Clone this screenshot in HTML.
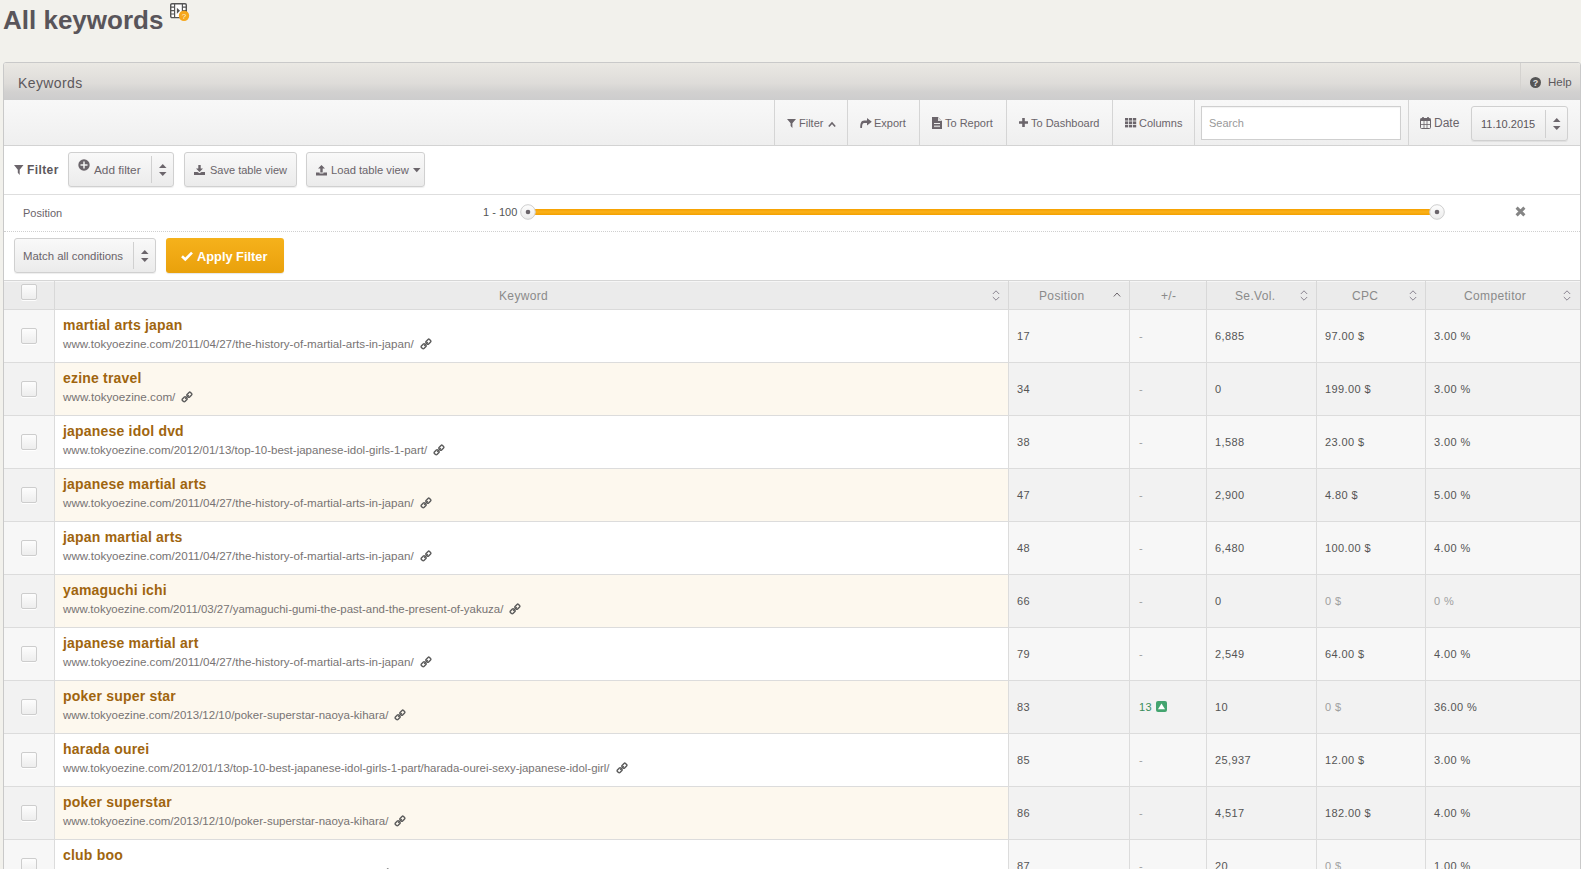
<!DOCTYPE html>
<html><head><meta charset="utf-8">
<style>
*{box-sizing:border-box;margin:0;padding:0}
html,body{width:1581px;height:869px;overflow:hidden}
body{background:#f2f1ec;font-family:"Liberation Sans",sans-serif;color:#666;position:relative}
.a{position:absolute;white-space:nowrap}
svg.a{overflow:visible}
.t11{font-size:11px;line-height:11px;color:#6a646a}
.tb{font-size:11px;line-height:11px;color:#6a646a}
.kw{font-size:14px;line-height:14px;font-weight:bold;letter-spacing:0.2px;color:#a0650e}
.url{font-size:11.6px;line-height:12px;color:#777373}
.num{font-size:11px;line-height:11px;letter-spacing:0.4px;color:#555}
.lt{color:#a0a0a0}
.cb{width:16px;height:16px;border:1px solid #cdcdcd;border-radius:2px;background:linear-gradient(#fdfdfd,#ededed);box-shadow:0 1px 0 rgba(255,255,255,.9)}
.btn{position:absolute;border:1px solid #d0d0d0;border-radius:3px;background:linear-gradient(#f9f9f9,#ebebeb);box-shadow:0 1px 1px rgba(0,0,0,.07)}
.hl{position:absolute;height:1px}
.vl{position:absolute;width:1px}
.th{font-size:12px;line-height:12px;letter-spacing:0.35px;color:#8a8a8a}
</style></head><body>

<div class="a " style="left:3px;top:7px;font-size:26px;line-height:26px;font-weight:bold;color:#59555a">All keywords</div>
<svg class="a" style="left:170px;top:3px" width="20" height="19" viewBox="0 0 20 19" ><rect x="0.7" y="0.7" width="15.6" height="13.9" rx="1.3" fill="#fff" stroke="#555" stroke-width="1.4"/><path d="M4.6 1 V14.5 M12.4 1 V14.5 M1 4.2 H4.6 M1 7.6 H4.6 M1 11 H4.6 M12.4 4.2 H16 M12.4 7.6 H16" stroke="#555" stroke-width="1.2"/><path d="M6.9 4.8 L10 7.8 L6.9 10.8Z" fill="#555"/><circle cx="14" cy="12.7" r="5.2" fill="#f6a71c"/><text x="14" y="15.6" font-size="8" text-anchor="middle" fill="#fdf3dc" font-family="Liberation Sans">?</text></svg>
<div class="a" style="left:3px;top:62px;width:1578px;height:820px;border:1px solid #c9c9c9;border-radius:3px 3px 0 0;background:#fff"></div>
<div class="a" style="left:4px;top:63px;width:1576px;height:37px;background:linear-gradient(#eae8e3,#dedcd9 55%,#d2d1d0 78%,#cdcdcd);border-radius:2px 2px 0 0"></div>
<div class="a " style="left:18px;top:76px;font-size:14px;line-height:14px;letter-spacing:0.4px;color:#5c585c">Keywords</div>
<div class="vl" style="left:1520px;top:63px;height:30px;background:#d4d2cf"></div>
<svg class="a" style="left:1530px;top:77px" width="11" height="11" viewBox="0 0 11 11" ><circle cx="5.5" cy="5.5" r="5.5" fill="#555"/><text x="5.5" y="8.8" font-size="9" font-weight="bold" text-anchor="middle" fill="#e5e3e0" font-family="Liberation Sans">?</text></svg>
<div class="a t11" style="left:1548px;top:77px;font-size:11.5px;color:#5c585c">Help</div>
<div class="a" style="left:4px;top:100px;width:1576px;height:46px;background:linear-gradient(#f8f8f8,#efefef);border-bottom:1px solid #d3d3d3"></div>
<div class="vl" style="left:774px;top:100px;height:45px;background:#d5d5d5"></div>
<div class="vl" style="left:847px;top:100px;height:45px;background:#d5d5d5"></div>
<div class="vl" style="left:919px;top:100px;height:45px;background:#d5d5d5"></div>
<div class="vl" style="left:1006px;top:100px;height:45px;background:#d5d5d5"></div>
<div class="vl" style="left:1112px;top:100px;height:45px;background:#d5d5d5"></div>
<div class="vl" style="left:1194px;top:100px;height:45px;background:#d5d5d5"></div>
<div class="vl" style="left:1408px;top:100px;height:45px;background:#d5d5d5"></div>
<svg class="a" style="left:787px;top:119px" width="9" height="9" viewBox="0 0 9 9" ><path d="M0 0 H9 L5.3999999999999995 4.32 V9 L3.6 7.0200000000000005 V4.32 Z" fill="#6b656b"/></svg>
<div class="a tb" style="left:799px;top:118px;">Filter</div>
<svg class="a" style="left:827.5px;top:122px" width="8" height="5" viewBox="0 0 8 5" ><path d="M0.8 4.5 L4 1 L7.2 4.5" fill="none" stroke="#6b656b" stroke-width="1.6"/></svg>
<svg class="a" style="left:860px;top:118px" width="12" height="10" viewBox="0 0 12 10" ><path d="M7 0 L11.8 3.8 L7 7.6 V5.1 H4.2 C2.8 5.1 2.1 6.4 2 10 H0.3 C0.1 5.2 1.2 2.5 4.2 2.5 H7 Z" fill="#6b656b"/></svg>
<div class="a tb" style="left:874px;top:118px;">Export</div>
<svg class="a" style="left:932px;top:117px" width="10" height="12" viewBox="0 0 10 12" ><path d="M0 0 H6 L10 4 V12 H0Z" fill="#6b656b"/><path d="M6 0 V4 H10" fill="#ddd"/><rect x="2" y="6" width="6" height="1" fill="#eee"/><rect x="2" y="8.5" width="6" height="1.6" fill="#ccc"/></svg>
<div class="a tb" style="left:945px;top:118px;">To Report</div>
<svg class="a" style="left:1019px;top:118px" width="9" height="9" viewBox="0 0 9 9" ><path d="M3.2 0 H5.8 V3.2 H9 V5.8 H5.8 V9 H3.2 V5.8 H0 V3.2 H3.2Z" fill="#6b656b"/></svg>
<div class="a tb" style="left:1031px;top:118px;">To Dashboard</div>
<svg class="a" style="left:1124.5px;top:118px" width="12" height="10" viewBox="0 0 12 10" ><rect x="0" y="0.0" width="3.2" height="2.6" fill="#6b656b"/><rect x="0" y="3.4" width="3.2" height="2.6" fill="#6b656b"/><rect x="0" y="6.8" width="3.2" height="2.6" fill="#6b656b"/><rect x="4" y="0.0" width="3.2" height="2.6" fill="#6b656b"/><rect x="4" y="3.4" width="3.2" height="2.6" fill="#6b656b"/><rect x="4" y="6.8" width="3.2" height="2.6" fill="#6b656b"/><rect x="8" y="0.0" width="3.2" height="2.6" fill="#6b656b"/><rect x="8" y="3.4" width="3.2" height="2.6" fill="#6b656b"/><rect x="8" y="6.8" width="3.2" height="2.6" fill="#6b656b"/></svg>
<div class="a tb" style="left:1139px;top:118px;">Columns</div>
<div class="a" style="left:1201px;top:106px;width:200px;height:34px;border:1px solid #cfcfcf;background:#fff;box-shadow:inset 0 1px 1px rgba(0,0,0,.05)"></div>
<div class="a " style="left:1209px;top:118px;font-size:11px;line-height:11px;color:#999">Search</div>
<svg class="a" style="left:1420px;top:117px" width="11" height="12" viewBox="0 0 11 12" ><rect x="0.5" y="1.5" width="10" height="10" rx="1" fill="none" stroke="#6b656b" stroke-width="1"/><rect x="0.5" y="1.5" width="10" height="2.5" fill="#6b656b"/><path d="M0.5 7.5 H10.5 M4 4 V11.5 M7 4 V11.5" stroke="#6b656b" stroke-width="0.8"/><rect x="2.2" y="0" width="1.6" height="3" fill="#6b656b"/><rect x="7.2" y="0" width="1.6" height="3" fill="#6b656b"/></svg>
<div class="a tb" style="left:1434px;top:118px;font-size:12px">Date</div>
<div class="btn" style="left:1471px;top:106px;width:97px;height:35px"></div>
<div class="vl" style="left:1545px;top:110px;height:28px;background:#d0d0d0"></div>
<div class="a tb" style="left:1481px;top:119px;color:#5a555a">11.10.2015</div>
<svg class="a" style="left:1552.75px;top:118px" width="7.5" height="12" viewBox="0 0 7.5 12" ><path d="M0 3.9 L3.75 0.1 L7.5 3.9Z M0 7.9 L3.75 11.9 L7.5 7.9Z" fill="#6b656b"/></svg>
<div class="hl" style="left:4px;top:194px;width:1576px;background:#dedede"></div>
<svg class="a" style="left:14px;top:165px" width="9.5" height="10" viewBox="0 0 9.5 10" ><path d="M0 0 H9.5 L5.7 4.8 V10 L3.8000000000000003 7.800000000000001 V4.8 Z" fill="#6b656b"/></svg>
<div class="a " style="left:27px;top:164px;font-size:12px;line-height:12px;letter-spacing:0.4px;font-weight:bold;color:#5c575c">Filter</div>
<div class="btn" style="left:68px;top:152px;width:106px;height:35px"></div>
<div class="vl" style="left:151px;top:156px;height:27px;background:#d0d0d0"></div>
<svg class="a" style="left:78px;top:159px" width="12" height="12" viewBox="0 0 12 12" ><circle cx="6" cy="6" r="5.7" fill="#6b656b"/><path d="M6 2.5 V9.5 M2.5 6 H9.5" stroke="#f4f4f4" stroke-width="1.5"/></svg>
<div class="a tb" style="left:94px;top:165px;font-size:11.8px">Add filter</div>
<svg class="a" style="left:158.75px;top:164px" width="7.5" height="12" viewBox="0 0 7.5 12" ><path d="M0 3.9 L3.75 0.1 L7.5 3.9Z M0 7.9 L3.75 11.9 L7.5 7.9Z" fill="#6b656b"/></svg>
<div class="btn" style="left:184px;top:152px;width:113px;height:35px"></div>
<svg class="a" style="left:194px;top:164.5px" width="11" height="10" viewBox="0 0 11 10" ><path d="M4.3 0 H6.7 V3.5 H9 L5.5 7 L2 3.5 H4.3Z M0 7 H3.5 L5.5 8.2 L7.5 7 H11 V10 H0Z" fill="#6b656b"/></svg>
<div class="a tb" style="left:210px;top:165px;">Save table view</div>
<div class="btn" style="left:306px;top:152px;width:119px;height:35px"></div>
<svg class="a" style="left:315.5px;top:164.5px" width="11" height="10.5" viewBox="0 0 11 10.5" ><path d="M5.5 0 L9 3.6 H6.7 V7.5 H4.3 V3.6 H2Z M0 7.5 H3.6 V8.6 H7.4 V7.5 H11 V10.5 H0Z" fill="#6b656b"/></svg>
<div class="a tb" style="left:331px;top:165px;font-size:11.2px">Load table view</div>
<svg class="a" style="left:412.5px;top:168px" width="8" height="5" viewBox="0 0 8 5" ><path d="M0 0 H7.5 L3.75 4.2Z" fill="#6b656b"/></svg>
<div class="a tb" style="left:23px;top:208px;">Position</div>
<div class="a " style="left:483px;top:207px;font-size:11px;line-height:11px;color:#555">1 - 100</div>
<div class="a" style="left:528px;top:209px;width:909px;height:6px;background:linear-gradient(#f5a000,#fbb21a 50%,#f3a000)"></div>
<svg class="a" style="left:519.5px;top:204px" width="16" height="16" viewBox="0 0 16 16" ><defs><linearGradient id="hg" x1="0" y1="0" x2="0" y2="1"><stop offset="0" stop-color="#fdfdfd"/><stop offset="1" stop-color="#ececec"/></linearGradient></defs><circle cx="8" cy="8" r="7.3" fill="url(#hg)" stroke="#cfcfcf" stroke-width="1"/><circle cx="8" cy="8" r="2.3" fill="#6b656b"/></svg>
<svg class="a" style="left:1429px;top:204px" width="16" height="16" viewBox="0 0 16 16" ><defs><linearGradient id="hg" x1="0" y1="0" x2="0" y2="1"><stop offset="0" stop-color="#fdfdfd"/><stop offset="1" stop-color="#ececec"/></linearGradient></defs><circle cx="8" cy="8" r="7.3" fill="url(#hg)" stroke="#cfcfcf" stroke-width="1"/><circle cx="8" cy="8" r="2.3" fill="#6b656b"/></svg>
<svg class="a" style="left:1515px;top:206px" width="11" height="11" viewBox="0 0 11 11" ><path d="M1.6 1.6 L9.4 9.4 M9.4 1.6 L1.6 9.4" stroke="#858585" stroke-width="3"/></svg>
<div class="hl" style="left:4px;top:231px;width:1576px;border-top:1px dotted #cfcfcf"></div>
<div class="btn" style="left:14px;top:238px;width:142px;height:35px"></div>
<div class="vl" style="left:133px;top:242px;height:27px;background:#d0d0d0"></div>
<div class="a tb" style="left:23px;top:251px;font-size:11.4px">Match all conditions</div>
<svg class="a" style="left:140.75px;top:250px" width="7.5" height="12" viewBox="0 0 7.5 12" ><path d="M0 3.9 L3.75 0.1 L7.5 3.9Z M0 7.9 L3.75 11.9 L7.5 7.9Z" fill="#6b656b"/></svg>
<div class="a" style="left:166px;top:238px;width:118px;height:35px;border-radius:3px;background:linear-gradient(#f5b21b,#f0a914 50%,#e9a10b);box-shadow:0 1px 1px rgba(0,0,0,.1)"></div>
<svg class="a" style="left:181px;top:251px" width="12" height="10" viewBox="0 0 12 10" ><path d="M1 5.2 L4.3 8.4 L11 1.6" fill="none" stroke="#fff" stroke-width="2.6"/></svg>
<div class="a " style="left:197px;top:251px;font-size:12.8px;line-height:12px;font-weight:bold;color:#fff">Apply Filter</div>
<div class="a" style="left:4px;top:280px;width:1576px;height:30px;background:#ebebeb;border-top:1px solid #d6d6d6;border-bottom:1px solid #dadada"></div>
<div class="hl" style="left:4px;top:281px;width:1576px;background:#f6f6f6"></div>
<div class="vl" style="left:54px;top:281px;height:28px;background:#d8d8d8"></div>
<div class="vl" style="left:1008px;top:281px;height:28px;background:#d8d8d8"></div>
<div class="vl" style="left:1129px;top:281px;height:28px;background:#d8d8d8"></div>
<div class="vl" style="left:1206px;top:281px;height:28px;background:#d8d8d8"></div>
<div class="vl" style="left:1316px;top:281px;height:28px;background:#d8d8d8"></div>
<div class="vl" style="left:1425px;top:281px;height:28px;background:#d8d8d8"></div>
<div class="a cb" style="left:21px;top:284px"></div>
<div class="a th" style="left:499px;top:290px;">Keyword</div>
<svg class="a" style="left:991.5px;top:290px" width="8" height="11" viewBox="0 0 8 11" ><path d="M0.8 4 L4 0.8 L7.2 4 M0.8 7 L4 10.2 L7.2 7" fill="none" stroke="#8a8490" stroke-width="1"/></svg>
<div class="a th" style="left:1039px;top:290px;">Position</div>
<svg class="a" style="left:1112.5px;top:292px" width="8" height="5" viewBox="0 0 8 5" ><path d="M0.8 4.5 L4 1 L7.2 4.5" fill="none" stroke="#6b656b" stroke-width="1.0"/></svg>
<div class="a th" style="left:1161px;top:290px;">+/-</div>
<div class="a th" style="left:1235px;top:290px;">Se.Vol.</div>
<svg class="a" style="left:1299.5px;top:290px" width="8" height="11" viewBox="0 0 8 11" ><path d="M0.8 4 L4 0.8 L7.2 4 M0.8 7 L4 10.2 L7.2 7" fill="none" stroke="#8a8490" stroke-width="1"/></svg>
<div class="a th" style="left:1352px;top:290px;">CPC</div>
<svg class="a" style="left:1408.5px;top:290px" width="8" height="11" viewBox="0 0 8 11" ><path d="M0.8 4 L4 0.8 L7.2 4 M0.8 7 L4 10.2 L7.2 7" fill="none" stroke="#8a8490" stroke-width="1"/></svg>
<div class="a th" style="left:1464px;top:290px;">Competitor</div>
<svg class="a" style="left:1563px;top:290px" width="8" height="11" viewBox="0 0 8 11" ><path d="M0.8 4 L4 0.8 L7.2 4 M0.8 7 L4 10.2 L7.2 7" fill="none" stroke="#8a8490" stroke-width="1"/></svg>
<div class="a" style="left:4px;top:310px;width:50px;height:52px;background:#f7f7f7"></div>
<div class="vl" style="left:54px;top:310px;height:53px;background:#dcdcdc"></div>
<div class="a" style="left:55px;top:310px;width:953px;height:52px;background:#ffffff"></div>
<div class="vl" style="left:1008px;top:310px;height:53px;background:#dcdcdc"></div>
<div class="a" style="left:1009px;top:310px;width:120px;height:52px;background:#f7f7f7"></div>
<div class="vl" style="left:1129px;top:310px;height:53px;background:#dcdcdc"></div>
<div class="a" style="left:1130px;top:310px;width:76px;height:52px;background:#f7f7f7"></div>
<div class="vl" style="left:1206px;top:310px;height:53px;background:#dcdcdc"></div>
<div class="a" style="left:1207px;top:310px;width:109px;height:52px;background:#f7f7f7"></div>
<div class="vl" style="left:1316px;top:310px;height:53px;background:#dcdcdc"></div>
<div class="a" style="left:1317px;top:310px;width:108px;height:52px;background:#f7f7f7"></div>
<div class="vl" style="left:1425px;top:310px;height:53px;background:#dcdcdc"></div>
<div class="a" style="left:1426px;top:310px;width:154px;height:52px;background:#f7f7f7"></div>
<div class="hl" style="left:4px;top:362px;width:1576px;background:#dcdcdc"></div>
<div class="a cb" style="left:21px;top:328px"></div>
<div class="a kw" style="left:63px;top:318px;">martial arts japan</div>
<div class="a url" style="left:63px;top:338px;font-size:11.64px">www.tokyoezine.com/2011/04/27/the-history-of-martial-arts-in-japan/</div>
<svg class="a" style="left:420px;top:338px" width="12" height="12" viewBox="0 0 12 12" ><g transform="rotate(-45 6 6)" fill="none" stroke="#5a5a5a" stroke-width="1.4"><rect x="0.3" y="4.2" width="4.8" height="3.6" rx="1"/><rect x="6.9" y="4.2" width="4.8" height="3.6" rx="1"/><path d="M3.4 6 H8.6" stroke-width="1.3"/></g></svg>
<div class="a num" style="left:1017px;top:331px;">17</div>
<div class="a num lt" style="left:1139px;top:331px;">-</div>
<div class="a num" style="left:1215px;top:331px;">6,885</div>
<div class="a num" style="left:1325px;top:331px;">97.00 $</div>
<div class="a num" style="left:1434px;top:331px;">3.00 %</div>
<div class="a" style="left:4px;top:363px;width:50px;height:52px;background:#f2f2f2"></div>
<div class="vl" style="left:54px;top:363px;height:53px;background:#dcdcdc"></div>
<div class="a" style="left:55px;top:363px;width:953px;height:52px;background:#fdf8ee"></div>
<div class="vl" style="left:1008px;top:363px;height:53px;background:#dcdcdc"></div>
<div class="a" style="left:1009px;top:363px;width:120px;height:52px;background:#f2f2f2"></div>
<div class="vl" style="left:1129px;top:363px;height:53px;background:#dcdcdc"></div>
<div class="a" style="left:1130px;top:363px;width:76px;height:52px;background:#f2f2f2"></div>
<div class="vl" style="left:1206px;top:363px;height:53px;background:#dcdcdc"></div>
<div class="a" style="left:1207px;top:363px;width:109px;height:52px;background:#f2f2f2"></div>
<div class="vl" style="left:1316px;top:363px;height:53px;background:#dcdcdc"></div>
<div class="a" style="left:1317px;top:363px;width:108px;height:52px;background:#f2f2f2"></div>
<div class="vl" style="left:1425px;top:363px;height:53px;background:#dcdcdc"></div>
<div class="a" style="left:1426px;top:363px;width:154px;height:52px;background:#f2f2f2"></div>
<div class="hl" style="left:4px;top:415px;width:1576px;background:#dcdcdc"></div>
<div class="a cb" style="left:21px;top:381px"></div>
<div class="a kw" style="left:63px;top:371px;">ezine travel</div>
<div class="a url" style="left:63px;top:391px;font-size:11.7px">www.tokyoezine.com/</div>
<svg class="a" style="left:181px;top:391px" width="12" height="12" viewBox="0 0 12 12" ><g transform="rotate(-45 6 6)" fill="none" stroke="#5a5a5a" stroke-width="1.4"><rect x="0.3" y="4.2" width="4.8" height="3.6" rx="1"/><rect x="6.9" y="4.2" width="4.8" height="3.6" rx="1"/><path d="M3.4 6 H8.6" stroke-width="1.3"/></g></svg>
<div class="a num" style="left:1017px;top:384px;">34</div>
<div class="a num lt" style="left:1139px;top:384px;">-</div>
<div class="a num" style="left:1215px;top:384px;">0</div>
<div class="a num" style="left:1325px;top:384px;">199.00 $</div>
<div class="a num" style="left:1434px;top:384px;">3.00 %</div>
<div class="a" style="left:4px;top:416px;width:50px;height:52px;background:#f7f7f7"></div>
<div class="vl" style="left:54px;top:416px;height:53px;background:#dcdcdc"></div>
<div class="a" style="left:55px;top:416px;width:953px;height:52px;background:#ffffff"></div>
<div class="vl" style="left:1008px;top:416px;height:53px;background:#dcdcdc"></div>
<div class="a" style="left:1009px;top:416px;width:120px;height:52px;background:#f7f7f7"></div>
<div class="vl" style="left:1129px;top:416px;height:53px;background:#dcdcdc"></div>
<div class="a" style="left:1130px;top:416px;width:76px;height:52px;background:#f7f7f7"></div>
<div class="vl" style="left:1206px;top:416px;height:53px;background:#dcdcdc"></div>
<div class="a" style="left:1207px;top:416px;width:109px;height:52px;background:#f7f7f7"></div>
<div class="vl" style="left:1316px;top:416px;height:53px;background:#dcdcdc"></div>
<div class="a" style="left:1317px;top:416px;width:108px;height:52px;background:#f7f7f7"></div>
<div class="vl" style="left:1425px;top:416px;height:53px;background:#dcdcdc"></div>
<div class="a" style="left:1426px;top:416px;width:154px;height:52px;background:#f7f7f7"></div>
<div class="hl" style="left:4px;top:468px;width:1576px;background:#dcdcdc"></div>
<div class="a cb" style="left:21px;top:434px"></div>
<div class="a kw" style="left:63px;top:424px;">japanese idol dvd</div>
<div class="a url" style="left:63px;top:444px;font-size:11.52px">www.tokyoezine.com/2012/01/13/top-10-best-japanese-idol-girls-1-part/</div>
<svg class="a" style="left:433px;top:444px" width="12" height="12" viewBox="0 0 12 12" ><g transform="rotate(-45 6 6)" fill="none" stroke="#5a5a5a" stroke-width="1.4"><rect x="0.3" y="4.2" width="4.8" height="3.6" rx="1"/><rect x="6.9" y="4.2" width="4.8" height="3.6" rx="1"/><path d="M3.4 6 H8.6" stroke-width="1.3"/></g></svg>
<div class="a num" style="left:1017px;top:437px;">38</div>
<div class="a num lt" style="left:1139px;top:437px;">-</div>
<div class="a num" style="left:1215px;top:437px;">1,588</div>
<div class="a num" style="left:1325px;top:437px;">23.00 $</div>
<div class="a num" style="left:1434px;top:437px;">3.00 %</div>
<div class="a" style="left:4px;top:469px;width:50px;height:52px;background:#f2f2f2"></div>
<div class="vl" style="left:54px;top:469px;height:53px;background:#dcdcdc"></div>
<div class="a" style="left:55px;top:469px;width:953px;height:52px;background:#fdf8ee"></div>
<div class="vl" style="left:1008px;top:469px;height:53px;background:#dcdcdc"></div>
<div class="a" style="left:1009px;top:469px;width:120px;height:52px;background:#f2f2f2"></div>
<div class="vl" style="left:1129px;top:469px;height:53px;background:#dcdcdc"></div>
<div class="a" style="left:1130px;top:469px;width:76px;height:52px;background:#f2f2f2"></div>
<div class="vl" style="left:1206px;top:469px;height:53px;background:#dcdcdc"></div>
<div class="a" style="left:1207px;top:469px;width:109px;height:52px;background:#f2f2f2"></div>
<div class="vl" style="left:1316px;top:469px;height:53px;background:#dcdcdc"></div>
<div class="a" style="left:1317px;top:469px;width:108px;height:52px;background:#f2f2f2"></div>
<div class="vl" style="left:1425px;top:469px;height:53px;background:#dcdcdc"></div>
<div class="a" style="left:1426px;top:469px;width:154px;height:52px;background:#f2f2f2"></div>
<div class="hl" style="left:4px;top:521px;width:1576px;background:#dcdcdc"></div>
<div class="a cb" style="left:21px;top:487px"></div>
<div class="a kw" style="left:63px;top:477px;">japanese martial arts</div>
<div class="a url" style="left:63px;top:497px;font-size:11.64px">www.tokyoezine.com/2011/04/27/the-history-of-martial-arts-in-japan/</div>
<svg class="a" style="left:420px;top:497px" width="12" height="12" viewBox="0 0 12 12" ><g transform="rotate(-45 6 6)" fill="none" stroke="#5a5a5a" stroke-width="1.4"><rect x="0.3" y="4.2" width="4.8" height="3.6" rx="1"/><rect x="6.9" y="4.2" width="4.8" height="3.6" rx="1"/><path d="M3.4 6 H8.6" stroke-width="1.3"/></g></svg>
<div class="a num" style="left:1017px;top:490px;">47</div>
<div class="a num lt" style="left:1139px;top:490px;">-</div>
<div class="a num" style="left:1215px;top:490px;">2,900</div>
<div class="a num" style="left:1325px;top:490px;">4.80 $</div>
<div class="a num" style="left:1434px;top:490px;">5.00 %</div>
<div class="a" style="left:4px;top:522px;width:50px;height:52px;background:#f7f7f7"></div>
<div class="vl" style="left:54px;top:522px;height:53px;background:#dcdcdc"></div>
<div class="a" style="left:55px;top:522px;width:953px;height:52px;background:#ffffff"></div>
<div class="vl" style="left:1008px;top:522px;height:53px;background:#dcdcdc"></div>
<div class="a" style="left:1009px;top:522px;width:120px;height:52px;background:#f7f7f7"></div>
<div class="vl" style="left:1129px;top:522px;height:53px;background:#dcdcdc"></div>
<div class="a" style="left:1130px;top:522px;width:76px;height:52px;background:#f7f7f7"></div>
<div class="vl" style="left:1206px;top:522px;height:53px;background:#dcdcdc"></div>
<div class="a" style="left:1207px;top:522px;width:109px;height:52px;background:#f7f7f7"></div>
<div class="vl" style="left:1316px;top:522px;height:53px;background:#dcdcdc"></div>
<div class="a" style="left:1317px;top:522px;width:108px;height:52px;background:#f7f7f7"></div>
<div class="vl" style="left:1425px;top:522px;height:53px;background:#dcdcdc"></div>
<div class="a" style="left:1426px;top:522px;width:154px;height:52px;background:#f7f7f7"></div>
<div class="hl" style="left:4px;top:574px;width:1576px;background:#dcdcdc"></div>
<div class="a cb" style="left:21px;top:540px"></div>
<div class="a kw" style="left:63px;top:530px;">japan martial arts</div>
<div class="a url" style="left:63px;top:550px;font-size:11.64px">www.tokyoezine.com/2011/04/27/the-history-of-martial-arts-in-japan/</div>
<svg class="a" style="left:420px;top:550px" width="12" height="12" viewBox="0 0 12 12" ><g transform="rotate(-45 6 6)" fill="none" stroke="#5a5a5a" stroke-width="1.4"><rect x="0.3" y="4.2" width="4.8" height="3.6" rx="1"/><rect x="6.9" y="4.2" width="4.8" height="3.6" rx="1"/><path d="M3.4 6 H8.6" stroke-width="1.3"/></g></svg>
<div class="a num" style="left:1017px;top:543px;">48</div>
<div class="a num lt" style="left:1139px;top:543px;">-</div>
<div class="a num" style="left:1215px;top:543px;">6,480</div>
<div class="a num" style="left:1325px;top:543px;">100.00 $</div>
<div class="a num" style="left:1434px;top:543px;">4.00 %</div>
<div class="a" style="left:4px;top:575px;width:50px;height:52px;background:#f2f2f2"></div>
<div class="vl" style="left:54px;top:575px;height:53px;background:#dcdcdc"></div>
<div class="a" style="left:55px;top:575px;width:953px;height:52px;background:#fdf8ee"></div>
<div class="vl" style="left:1008px;top:575px;height:53px;background:#dcdcdc"></div>
<div class="a" style="left:1009px;top:575px;width:120px;height:52px;background:#f2f2f2"></div>
<div class="vl" style="left:1129px;top:575px;height:53px;background:#dcdcdc"></div>
<div class="a" style="left:1130px;top:575px;width:76px;height:52px;background:#f2f2f2"></div>
<div class="vl" style="left:1206px;top:575px;height:53px;background:#dcdcdc"></div>
<div class="a" style="left:1207px;top:575px;width:109px;height:52px;background:#f2f2f2"></div>
<div class="vl" style="left:1316px;top:575px;height:53px;background:#dcdcdc"></div>
<div class="a" style="left:1317px;top:575px;width:108px;height:52px;background:#f2f2f2"></div>
<div class="vl" style="left:1425px;top:575px;height:53px;background:#dcdcdc"></div>
<div class="a" style="left:1426px;top:575px;width:154px;height:52px;background:#f2f2f2"></div>
<div class="hl" style="left:4px;top:627px;width:1576px;background:#dcdcdc"></div>
<div class="a cb" style="left:21px;top:593px"></div>
<div class="a kw" style="left:63px;top:583px;">yamaguchi ichi</div>
<div class="a url" style="left:63px;top:603px;font-size:11.46px">www.tokyoezine.com/2011/03/27/yamaguchi-gumi-the-past-and-the-present-of-yakuza/</div>
<svg class="a" style="left:509px;top:603px" width="12" height="12" viewBox="0 0 12 12" ><g transform="rotate(-45 6 6)" fill="none" stroke="#5a5a5a" stroke-width="1.4"><rect x="0.3" y="4.2" width="4.8" height="3.6" rx="1"/><rect x="6.9" y="4.2" width="4.8" height="3.6" rx="1"/><path d="M3.4 6 H8.6" stroke-width="1.3"/></g></svg>
<div class="a num" style="left:1017px;top:596px;">66</div>
<div class="a num lt" style="left:1139px;top:596px;">-</div>
<div class="a num" style="left:1215px;top:596px;">0</div>
<div class="a num lt" style="left:1325px;top:596px;">0 $</div>
<div class="a num lt" style="left:1434px;top:596px;">0 %</div>
<div class="a" style="left:4px;top:628px;width:50px;height:52px;background:#f7f7f7"></div>
<div class="vl" style="left:54px;top:628px;height:53px;background:#dcdcdc"></div>
<div class="a" style="left:55px;top:628px;width:953px;height:52px;background:#ffffff"></div>
<div class="vl" style="left:1008px;top:628px;height:53px;background:#dcdcdc"></div>
<div class="a" style="left:1009px;top:628px;width:120px;height:52px;background:#f7f7f7"></div>
<div class="vl" style="left:1129px;top:628px;height:53px;background:#dcdcdc"></div>
<div class="a" style="left:1130px;top:628px;width:76px;height:52px;background:#f7f7f7"></div>
<div class="vl" style="left:1206px;top:628px;height:53px;background:#dcdcdc"></div>
<div class="a" style="left:1207px;top:628px;width:109px;height:52px;background:#f7f7f7"></div>
<div class="vl" style="left:1316px;top:628px;height:53px;background:#dcdcdc"></div>
<div class="a" style="left:1317px;top:628px;width:108px;height:52px;background:#f7f7f7"></div>
<div class="vl" style="left:1425px;top:628px;height:53px;background:#dcdcdc"></div>
<div class="a" style="left:1426px;top:628px;width:154px;height:52px;background:#f7f7f7"></div>
<div class="hl" style="left:4px;top:680px;width:1576px;background:#dcdcdc"></div>
<div class="a cb" style="left:21px;top:646px"></div>
<div class="a kw" style="left:63px;top:636px;">japanese martial art</div>
<div class="a url" style="left:63px;top:656px;font-size:11.64px">www.tokyoezine.com/2011/04/27/the-history-of-martial-arts-in-japan/</div>
<svg class="a" style="left:420px;top:656px" width="12" height="12" viewBox="0 0 12 12" ><g transform="rotate(-45 6 6)" fill="none" stroke="#5a5a5a" stroke-width="1.4"><rect x="0.3" y="4.2" width="4.8" height="3.6" rx="1"/><rect x="6.9" y="4.2" width="4.8" height="3.6" rx="1"/><path d="M3.4 6 H8.6" stroke-width="1.3"/></g></svg>
<div class="a num" style="left:1017px;top:649px;">79</div>
<div class="a num lt" style="left:1139px;top:649px;">-</div>
<div class="a num" style="left:1215px;top:649px;">2,549</div>
<div class="a num" style="left:1325px;top:649px;">64.00 $</div>
<div class="a num" style="left:1434px;top:649px;">4.00 %</div>
<div class="a" style="left:4px;top:681px;width:50px;height:52px;background:#f2f2f2"></div>
<div class="vl" style="left:54px;top:681px;height:53px;background:#dcdcdc"></div>
<div class="a" style="left:55px;top:681px;width:953px;height:52px;background:#fdf8ee"></div>
<div class="vl" style="left:1008px;top:681px;height:53px;background:#dcdcdc"></div>
<div class="a" style="left:1009px;top:681px;width:120px;height:52px;background:#f2f2f2"></div>
<div class="vl" style="left:1129px;top:681px;height:53px;background:#dcdcdc"></div>
<div class="a" style="left:1130px;top:681px;width:76px;height:52px;background:#f2f2f2"></div>
<div class="vl" style="left:1206px;top:681px;height:53px;background:#dcdcdc"></div>
<div class="a" style="left:1207px;top:681px;width:109px;height:52px;background:#f2f2f2"></div>
<div class="vl" style="left:1316px;top:681px;height:53px;background:#dcdcdc"></div>
<div class="a" style="left:1317px;top:681px;width:108px;height:52px;background:#f2f2f2"></div>
<div class="vl" style="left:1425px;top:681px;height:53px;background:#dcdcdc"></div>
<div class="a" style="left:1426px;top:681px;width:154px;height:52px;background:#f2f2f2"></div>
<div class="hl" style="left:4px;top:733px;width:1576px;background:#dcdcdc"></div>
<div class="a cb" style="left:21px;top:699px"></div>
<div class="a kw" style="left:63px;top:689px;">poker super star</div>
<div class="a url" style="left:63px;top:709px;font-size:11.5px">www.tokyoezine.com/2013/12/10/poker-superstar-naoya-kihara/</div>
<svg class="a" style="left:394px;top:709px" width="12" height="12" viewBox="0 0 12 12" ><g transform="rotate(-45 6 6)" fill="none" stroke="#5a5a5a" stroke-width="1.4"><rect x="0.3" y="4.2" width="4.8" height="3.6" rx="1"/><rect x="6.9" y="4.2" width="4.8" height="3.6" rx="1"/><path d="M3.4 6 H8.6" stroke-width="1.3"/></g></svg>
<div class="a num" style="left:1017px;top:702px;">83</div>
<div class="a num" style="left:1139px;top:702px;color:#3a8d5c">13</div>
<svg class="a" style="left:1156px;top:701px" width="11" height="11" viewBox="0 0 11 11" ><rect width="11" height="11" rx="2" fill="#43a46f"/><path d="M2 8.2 H9 L5.5 2.6Z" fill="#fff"/></svg>
<div class="a num" style="left:1215px;top:702px;">10</div>
<div class="a num lt" style="left:1325px;top:702px;">0 $</div>
<div class="a num" style="left:1434px;top:702px;">36.00 %</div>
<div class="a" style="left:4px;top:734px;width:50px;height:52px;background:#f7f7f7"></div>
<div class="vl" style="left:54px;top:734px;height:53px;background:#dcdcdc"></div>
<div class="a" style="left:55px;top:734px;width:953px;height:52px;background:#ffffff"></div>
<div class="vl" style="left:1008px;top:734px;height:53px;background:#dcdcdc"></div>
<div class="a" style="left:1009px;top:734px;width:120px;height:52px;background:#f7f7f7"></div>
<div class="vl" style="left:1129px;top:734px;height:53px;background:#dcdcdc"></div>
<div class="a" style="left:1130px;top:734px;width:76px;height:52px;background:#f7f7f7"></div>
<div class="vl" style="left:1206px;top:734px;height:53px;background:#dcdcdc"></div>
<div class="a" style="left:1207px;top:734px;width:109px;height:52px;background:#f7f7f7"></div>
<div class="vl" style="left:1316px;top:734px;height:53px;background:#dcdcdc"></div>
<div class="a" style="left:1317px;top:734px;width:108px;height:52px;background:#f7f7f7"></div>
<div class="vl" style="left:1425px;top:734px;height:53px;background:#dcdcdc"></div>
<div class="a" style="left:1426px;top:734px;width:154px;height:52px;background:#f7f7f7"></div>
<div class="hl" style="left:4px;top:786px;width:1576px;background:#dcdcdc"></div>
<div class="a cb" style="left:21px;top:752px"></div>
<div class="a kw" style="left:63px;top:742px;">harada ourei</div>
<div class="a url" style="left:63px;top:762px;font-size:11.42px">www.tokyoezine.com/2012/01/13/top-10-best-japanese-idol-girls-1-part/harada-ourei-sexy-japanese-idol-girl/</div>
<svg class="a" style="left:616px;top:762px" width="12" height="12" viewBox="0 0 12 12" ><g transform="rotate(-45 6 6)" fill="none" stroke="#5a5a5a" stroke-width="1.4"><rect x="0.3" y="4.2" width="4.8" height="3.6" rx="1"/><rect x="6.9" y="4.2" width="4.8" height="3.6" rx="1"/><path d="M3.4 6 H8.6" stroke-width="1.3"/></g></svg>
<div class="a num" style="left:1017px;top:755px;">85</div>
<div class="a num lt" style="left:1139px;top:755px;">-</div>
<div class="a num" style="left:1215px;top:755px;">25,937</div>
<div class="a num" style="left:1325px;top:755px;">12.00 $</div>
<div class="a num" style="left:1434px;top:755px;">3.00 %</div>
<div class="a" style="left:4px;top:787px;width:50px;height:52px;background:#f2f2f2"></div>
<div class="vl" style="left:54px;top:787px;height:53px;background:#dcdcdc"></div>
<div class="a" style="left:55px;top:787px;width:953px;height:52px;background:#fdf8ee"></div>
<div class="vl" style="left:1008px;top:787px;height:53px;background:#dcdcdc"></div>
<div class="a" style="left:1009px;top:787px;width:120px;height:52px;background:#f2f2f2"></div>
<div class="vl" style="left:1129px;top:787px;height:53px;background:#dcdcdc"></div>
<div class="a" style="left:1130px;top:787px;width:76px;height:52px;background:#f2f2f2"></div>
<div class="vl" style="left:1206px;top:787px;height:53px;background:#dcdcdc"></div>
<div class="a" style="left:1207px;top:787px;width:109px;height:52px;background:#f2f2f2"></div>
<div class="vl" style="left:1316px;top:787px;height:53px;background:#dcdcdc"></div>
<div class="a" style="left:1317px;top:787px;width:108px;height:52px;background:#f2f2f2"></div>
<div class="vl" style="left:1425px;top:787px;height:53px;background:#dcdcdc"></div>
<div class="a" style="left:1426px;top:787px;width:154px;height:52px;background:#f2f2f2"></div>
<div class="hl" style="left:4px;top:839px;width:1576px;background:#dcdcdc"></div>
<div class="a cb" style="left:21px;top:805px"></div>
<div class="a kw" style="left:63px;top:795px;">poker superstar</div>
<div class="a url" style="left:63px;top:815px;font-size:11.5px">www.tokyoezine.com/2013/12/10/poker-superstar-naoya-kihara/</div>
<svg class="a" style="left:394px;top:815px" width="12" height="12" viewBox="0 0 12 12" ><g transform="rotate(-45 6 6)" fill="none" stroke="#5a5a5a" stroke-width="1.4"><rect x="0.3" y="4.2" width="4.8" height="3.6" rx="1"/><rect x="6.9" y="4.2" width="4.8" height="3.6" rx="1"/><path d="M3.4 6 H8.6" stroke-width="1.3"/></g></svg>
<div class="a num" style="left:1017px;top:808px;">86</div>
<div class="a num lt" style="left:1139px;top:808px;">-</div>
<div class="a num" style="left:1215px;top:808px;">4,517</div>
<div class="a num" style="left:1325px;top:808px;">182.00 $</div>
<div class="a num" style="left:1434px;top:808px;">4.00 %</div>
<div class="a" style="left:4px;top:840px;width:50px;height:52px;background:#f7f7f7"></div>
<div class="vl" style="left:54px;top:840px;height:53px;background:#dcdcdc"></div>
<div class="a" style="left:55px;top:840px;width:953px;height:52px;background:#ffffff"></div>
<div class="vl" style="left:1008px;top:840px;height:53px;background:#dcdcdc"></div>
<div class="a" style="left:1009px;top:840px;width:120px;height:52px;background:#f7f7f7"></div>
<div class="vl" style="left:1129px;top:840px;height:53px;background:#dcdcdc"></div>
<div class="a" style="left:1130px;top:840px;width:76px;height:52px;background:#f7f7f7"></div>
<div class="vl" style="left:1206px;top:840px;height:53px;background:#dcdcdc"></div>
<div class="a" style="left:1207px;top:840px;width:109px;height:52px;background:#f7f7f7"></div>
<div class="vl" style="left:1316px;top:840px;height:53px;background:#dcdcdc"></div>
<div class="a" style="left:1317px;top:840px;width:108px;height:52px;background:#f7f7f7"></div>
<div class="vl" style="left:1425px;top:840px;height:53px;background:#dcdcdc"></div>
<div class="a" style="left:1426px;top:840px;width:154px;height:52px;background:#f7f7f7"></div>
<div class="hl" style="left:4px;top:892px;width:1576px;background:#dcdcdc"></div>
<div class="a cb" style="left:21px;top:858px"></div>
<div class="a kw" style="left:63px;top:848px;">club boo</div>
<div class="a url" style="left:63px;top:868px;font-size:11.5px">www.tokyoezine.com/2012/08/21/club-boo-shibuya-tokyo/</div>
<svg class="a" style="left:379px;top:868px" width="12" height="12" viewBox="0 0 12 12" ><g transform="rotate(-45 6 6)" fill="none" stroke="#5a5a5a" stroke-width="1.4"><rect x="0.3" y="4.2" width="4.8" height="3.6" rx="1"/><rect x="6.9" y="4.2" width="4.8" height="3.6" rx="1"/><path d="M3.4 6 H8.6" stroke-width="1.3"/></g></svg>
<div class="a num" style="left:1017px;top:861px;">87</div>
<div class="a num lt" style="left:1139px;top:861px;">-</div>
<div class="a num" style="left:1215px;top:861px;">20</div>
<div class="a num lt" style="left:1325px;top:861px;">0 $</div>
<div class="a num" style="left:1434px;top:861px;">1.00 %</div>
</body></html>
